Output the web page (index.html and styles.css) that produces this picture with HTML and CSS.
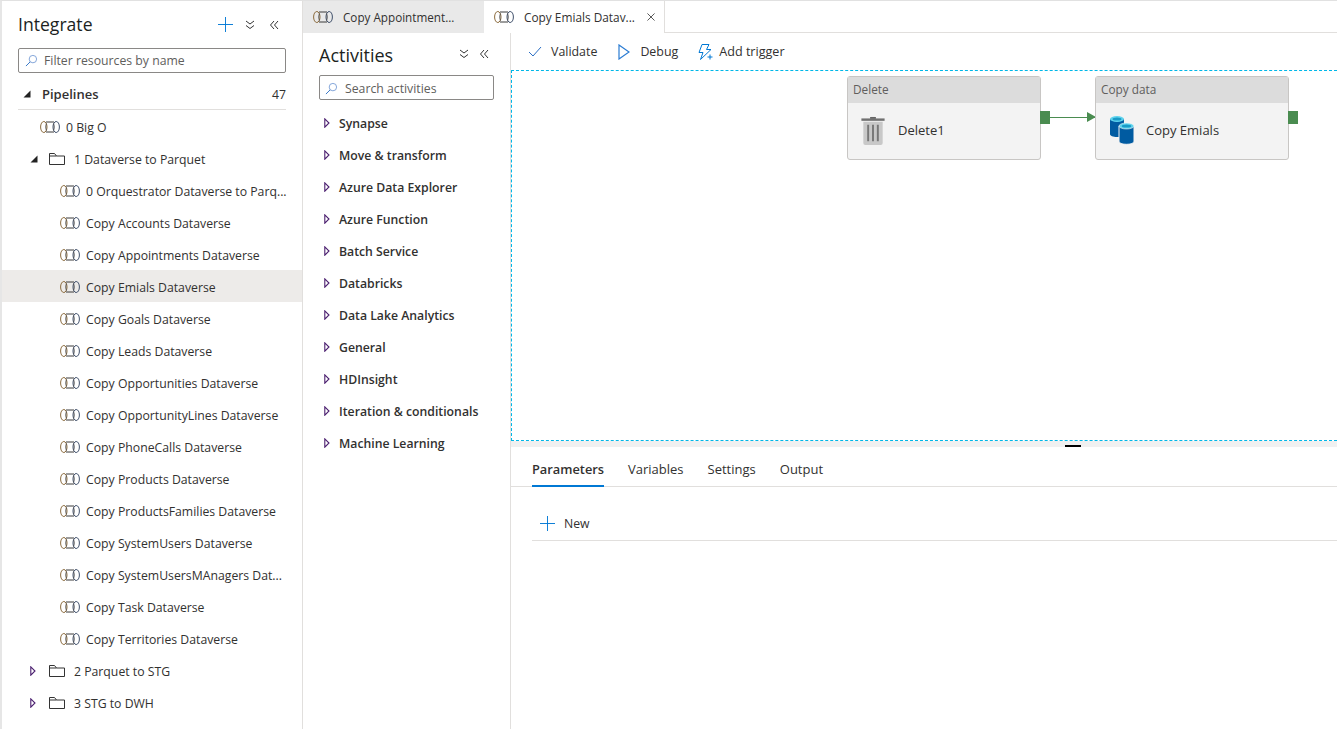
FILE: index.html
```html
<!DOCTYPE html>
<html lang="en">
<head>
	<meta charset="UTF-8">
	<title>Integrate</title>
	<link rel="stylesheet" href="styles.css">
</head>
<body>
	<svg class="defs" width="0" height="0">
		<symbol id="pipe" viewBox="0 0 20 14">
			<path d="M6 2h8M6 12h8" fill="none" stroke="#3b3b3b" stroke-width="1"/>
			<ellipse cx="3.800" cy="7" rx="3.200" ry="5.500" fill="none" stroke="#8a6a3c" stroke-width="1"/>
			<ellipse cx="16.200" cy="7" rx="3.200" ry="5.500" fill="none" stroke="#3f4f6a" stroke-width="1"/>
			<path d="M6.500 3.500c-1 2-1 5 0 7M13.500 3.500c1 2 1 5 0 7" fill="none" stroke="#3b3b3b" stroke-width=".8"/>
		</symbol>
		<symbol id="folder" viewBox="0 0 16 12">
			<path d="M.5 11.500V.5h5l2 2.500h8v8.500z" fill="none" stroke="#333" stroke-width="1"/>
			<path d="M.5 3h7" fill="none" stroke="#333" stroke-width="1"/>
		</symbol>
		<symbol id="search" viewBox="0 0 14 14">
			<circle cx="8.500" cy="5.500" r="4" fill="none" stroke="#7a9fd6" stroke-width="1"/>
			<path d="M5.500 8.500L1 13" fill="none" stroke="#2b6fc4" stroke-width="1"/>
		</symbol>
		<symbol id="down2" viewBox="0 0 10 10">
			<path d="M1 1l4 3 4-3M1 5.500l4 3 4-3" fill="none" stroke="#333" stroke-width="1"/>
		</symbol>
		<symbol id="left2" viewBox="0 0 10 10">
			<path d="M5 1L1.500 5 5 9M9 1L5.500 5 9 9" fill="none" stroke="#333" stroke-width="1"/>
		</symbol>
		<symbol id="closed" viewBox="0 0 6 10">
			<path d="M.8.800L5 5 .8 9.200z" fill="none" stroke="#4b1f6f" stroke-width="1.100"/>
		</symbol>
		<symbol id="open" viewBox="0 0 8 8">
			<path d="M7.500.5v7h-7z" fill="#222"/>
		</symbol>
	</svg>

	<div class="app">
		<aside class="side">
			<div class="side-head">
				<h1>Integrate</h1>
				<svg class="add" viewBox="0 0 16 16"><path d="M8 0v16M0 8h16" stroke="#0078d4" stroke-width="1" fill="none"/></svg>
				<svg class="ico10"><use href="#down2"/></svg>
				<svg class="ico10 gap"><use href="#left2"/></svg>
			</div>
			<div class="filter">
				<svg class="ico14"><use href="#search"/></svg>
				<span>Filter resources by name</span>
			</div>
			<div class="group">
				<svg class="tri"><use href="#open"/></svg>
				<b>Pipelines</b>
				<em>47</em>
			</div>
			<ul class="tree">
				<li class="lvl1"><svg class="pipe"><use href="#pipe"/></svg>0 Big O</li>
				<li class="lvl0"><svg class="tri"><use href="#open"/></svg><svg class="fold"><use href="#folder"/></svg>1 Dataverse to Parquet</li>
				<li class="lvl2"><svg class="pipe"><use href="#pipe"/></svg>0 Orquestrator Dataverse to Parq...</li>
				<li class="lvl2"><svg class="pipe"><use href="#pipe"/></svg>Copy Accounts Dataverse</li>
				<li class="lvl2"><svg class="pipe"><use href="#pipe"/></svg>Copy Appointments Dataverse</li>
				<li class="lvl2 sel"><svg class="pipe"><use href="#pipe"/></svg>Copy Emials Dataverse</li>
				<li class="lvl2"><svg class="pipe"><use href="#pipe"/></svg>Copy Goals Dataverse</li>
				<li class="lvl2"><svg class="pipe"><use href="#pipe"/></svg>Copy Leads Dataverse</li>
				<li class="lvl2"><svg class="pipe"><use href="#pipe"/></svg>Copy Opportunities Dataverse</li>
				<li class="lvl2"><svg class="pipe"><use href="#pipe"/></svg>Copy OpportunityLines Dataverse</li>
				<li class="lvl2"><svg class="pipe"><use href="#pipe"/></svg>Copy PhoneCalls Dataverse</li>
				<li class="lvl2"><svg class="pipe"><use href="#pipe"/></svg>Copy Products Dataverse</li>
				<li class="lvl2"><svg class="pipe"><use href="#pipe"/></svg>Copy ProductsFamilies Dataverse</li>
				<li class="lvl2"><svg class="pipe"><use href="#pipe"/></svg>Copy SystemUsers Dataverse</li>
				<li class="lvl2"><svg class="pipe"><use href="#pipe"/></svg>Copy SystemUsersMAnagers Dat...</li>
				<li class="lvl2"><svg class="pipe"><use href="#pipe"/></svg>Copy Task Dataverse</li>
				<li class="lvl2"><svg class="pipe"><use href="#pipe"/></svg>Copy Territories Dataverse</li>
				<li class="lvl0"><svg class="tri-c"><use href="#closed"/></svg><svg class="fold"><use href="#folder"/></svg>2 Parquet to STG</li>
				<li class="lvl0"><svg class="tri-c"><use href="#closed"/></svg><svg class="fold"><use href="#folder"/></svg>3 STG to DWH</li>
			</ul>
		</aside>

		<main class="main">
			<div class="tabs">
				<div class="tab"><svg class="pipe"><use href="#pipe"/></svg><span>Copy Appointment...</span></div>
				<div class="tab on"><svg class="pipe"><use href="#pipe"/></svg><span>Copy Emials Datav...</span>
					<svg class="x" viewBox="0 0 9 9"><path d="M.5.500l8 8M8.500.500l-8 8" stroke="#444" fill="none"/></svg>
				</div>
			</div>
			<div class="work">
				<section class="acts">
					<div class="acts-head">
						<h2>Activities</h2>
						<svg class="ico10"><use href="#down2"/></svg>
						<svg class="ico10 gap2"><use href="#left2"/></svg>
					</div>
					<div class="search">
						<svg class="ico14"><use href="#search"/></svg>
						<span>Search activities</span>
					</div>
					<ul class="act-list">
						<li><svg class="tri-c"><use href="#closed"/></svg>Synapse</li>
						<li><svg class="tri-c"><use href="#closed"/></svg>Move &amp; transform</li>
						<li><svg class="tri-c"><use href="#closed"/></svg>Azure Data Explorer</li>
						<li><svg class="tri-c"><use href="#closed"/></svg>Azure Function</li>
						<li><svg class="tri-c"><use href="#closed"/></svg>Batch Service</li>
						<li><svg class="tri-c"><use href="#closed"/></svg>Databricks</li>
						<li><svg class="tri-c"><use href="#closed"/></svg>Data Lake Analytics</li>
						<li><svg class="tri-c"><use href="#closed"/></svg>General</li>
						<li><svg class="tri-c"><use href="#closed"/></svg>HDInsight</li>
						<li><svg class="tri-c"><use href="#closed"/></svg>Iteration &amp; conditionals</li>
						<li><svg class="tri-c"><use href="#closed"/></svg>Machine Learning</li>
					</ul>
				</section>
				<section class="editor">
					<div class="toolbar">
						<button class="tool t1"><svg viewBox="0 0 14 11" class="tool-ico"><path d="M1 6l4 4 8-9" fill="none" stroke="#2b6fc4"/></svg>Validate</button>
						<button class="tool t2"><svg viewBox="0 0 12 16" class="tool-ico2"><path d="M1 1l10 7-10 7z" fill="none" stroke="#2b7cd3" stroke-width="1.200"/></svg>Debug</button>
						<button class="tool t3"><svg viewBox="0 0 16 16" class="tool-ico3"><path d="M5 .5h7L9.500 5.500H14L3.500 15.500 6 8.500H2z" fill="none" stroke="#0078d4"/><path d="M10.500 13h5M13 10.500v5" stroke="#0078d4" fill="none"/></svg>Add trigger</button>
					</div>
					<div class="canvas">
						<div class="node n1">
							<div class="node-type">Delete</div>
							<div class="node-body">
								<svg class="trash" viewBox="0 0 24 30">
									<path d="M9 1h6v2H9z" fill="#666"/>
									<path d="M0 2.500h24V5H0z" fill="#707070"/>
									<path d="M2 6h20v22a2 2 0 0 1-2 2H4a2 2 0 0 1-2-2z" fill="#c8c8c8"/>
									<path d="M7 9v17M12 9v17M17 9v17" stroke="#777" stroke-width="2"/>
								</svg>
								<span>Delete1</span>
							</div>
							<i class="port"></i>
						</div>
						<div class="link"><i></i></div>
						<div class="node n2">
							<div class="node-type">Copy data</div>
							<div class="node-body">
								<svg class="db" viewBox="0 0 26 30">
									<path d="M1 4v15c0 2 3 3 7 3s7-1 7-3V4z" fill="#005ba1"/>
									<ellipse cx="8" cy="4" rx="7" ry="3" fill="#5fd4ee"/>
									<ellipse cx="8" cy="4" rx="4.500" ry="1.600" fill="#1a9bc7"/>
									<path d="M10 11v15c0 2.200 3.200 3.300 7.500 3.300S25 28.200 25 26V11z" fill="#005ba1" stroke="#f3f3f3"/>
									<ellipse cx="17.500" cy="11" rx="7.500" ry="3" fill="#5fd4ee" stroke="#f3f3f3" stroke-width=".6"/>
									<ellipse cx="17.500" cy="11" rx="4.800" ry="1.600" fill="#1a9bc7"/>
								</svg>
								<span>Copy Emials</span>
							</div>
							<i class="port"></i>
						</div>
					</div>
					<div class="split"><i></i></div>
					<div class="props">
						<div class="prop-tabs">
							<a class="on">Parameters</a>
							<a>Variables</a>
							<a>Settings</a>
							<a>Output</a>
						</div>
						<div class="new-row">
							<svg viewBox="0 0 16 16"><path d="M8 0v16M0 8h16" stroke="#0078d4" fill="none"/></svg>
							New
						</div>
					</div>
				</section>
			</div>
		</main>
	</div>
</body>
</html>
```

FILE: styles.css
```css
* { box-sizing:border-box; }
html, body { height:100%; }
body { margin:0;background:#fff;color:#323130;font-size:12.25px;font-family:"Open Sans","Noto Sans",sans-serif;overflow:hidden; }
ul { margin:0;padding:0;list-style:none; }
h1, h2 { margin:0;font-weight:400;color:#201f1e; }
svg { display:block;flex:none; }
.defs { position:absolute; }

.app { display:flex;height:729px;border-top:1px solid #e1e1e1;border-left:2px solid #e6e6e6; }

/* left resources panel */
.side { width:301px;flex:none;padding:0 16px;border-right:1px solid #e1dfdd;background:#fff; }
.side-head { display:flex;align-items:center;height:47px; }
.side-head h1 { font-size:17.6px;flex:1;padding-bottom:2px; }
.add { width:15px;height:15px;margin-right:12px; }
.ico10 { width:10px;height:10px; }
.gap { margin-left:14px;margin-right:7px; }
.filter, .search { display:flex;align-items:center;border:1px solid #8a8886;border-radius:2px;color:#605e5c; }
.filter { height:25px;padding-left:6px; }
.ico14 { width:13px;height:13px;margin-right:6px; }
.group { display:flex;align-items:center;height:37px;padding-top:6px;border-bottom:1px solid #e1dfdd; }
.group b { flex:1;font-weight:600;margin-left:10px;font-size:13px; }
.group em { font-style:normal; }
.tri { width:8px;height:8px;margin-left:5px;margin-right:1px; }
.tri-c { width:6px;height:10px; }

.tree { margin:0 -16px; }
.tree li { display:flex;align-items:center;height:32px;padding-top:2px;white-space:nowrap; }
.pipe { width:20px;height:14px;margin-right:6px; }
.fold { width:16px;height:12px;margin-right:9px; }
.lvl0 { padding-left:28px; }
.lvl0 .tri { margin-left:0;margin-right:11px; }
.lvl0 .tri-c { margin-right:13px; }
.lvl1 { padding-left:38px; }
.lvl2 { padding-left:58px; }
.sel { background:#edebe9; }

/* main column */
.main { flex:1;min-width:0;display:flex;flex-direction:column; }
.tabs { display:flex;height:32px;border-bottom:1px solid #e1dfdd;font-size:11.7px; }
.tab { display:flex;align-items:center;width:181px;height:32px;padding-left:10px;background:#e9e9e9;color:#323130; }
.tab .pipe { margin-right:10px; }
.tab.on { width:181px;background:#fff;border-right:1px solid #e1dfdd;font-size:11.85px; }
.x { width:8px;height:8px;margin-left:12px; }

.work { flex:1;display:flex;min-height:0; }

/* activities */
.acts { width:208px;flex:none;padding:0 16px;border-right:1px solid #e1dfdd; }
.acts-head { display:flex;align-items:center;height:42px; }
.acts-head h2 { font-size:18px;flex:1;padding-top:2px; }
.gap2 { margin-left:10px;margin-right:5px; }
.search { height:25px;padding-left:5px;padding-top:1px; }
.search .ico14 { margin-right:7px; }
.act-list { margin-top:7px; }
.act-list li { display:flex;align-items:center;height:32px;font-weight:600;white-space:nowrap; }
.act-list .tri-c { margin-left:5px;margin-right:9px; }

/* editor */
.editor { flex:1;min-width:0;display:flex;flex-direction:column; }
.toolbar { display:flex;align-items:center;height:37px;padding-left:17px;font-size:12.4px; }
.tool { display:flex;align-items:center;border:0;background:none;padding:0;font:inherit;color:#323130; }
.tool-ico { width:14px;height:11px;margin-right:9px; }
.tool-ico2 { width:12px;height:16px;margin-right:10px; }
.tool-ico3 { width:16px;height:16px;margin-right:6px; }
.t2 { margin-left:21px; }
.t3 { margin-left:19px;font-size:12.6px; }

.canvas { position:relative;height:371px;border:1px dashed #00b7e8;border-width:1px 0 1px 1px; }
.node { position:absolute;top:5px;width:194px;height:84px;background:#f3f3f3;border:1px solid #c8c6c4;border-radius:3px; }
.n1 { left:335px; }
.n2 { left:583px; }
.node-type { height:26px;line-height:25px;padding-left:5px;background:#dcdcdc;color:#605e5c;font-size:11.8px; }
.node-body { display:flex;align-items:center;height:56px;padding-left:13px;padding-bottom:2px;color:#323130;font-size:13px; }
.trash { width:24px;height:29px;margin-right:13px; }
.db { width:26px;height:30px;margin-right:11px; }
.port { position:absolute;left:192px;top:34px;width:10px;height:13px;background:#4a8c50; }
.link { position:absolute;left:538px;top:46px;width:46px;height:1px;background:#4a8c50; }
.link i { position:absolute;right:0;top:-5px;border-left:9px solid #4a8c50;border-top:5.500px solid transparent;border-bottom:5.500px solid transparent; }

.split { position:relative;height:6px;background:#f0f0f0; }
.split i { position:absolute;left:554px;top:4px;width:16px;height:2px;background:#000; }

.props { flex:1;background:#fff;padding-left:21px; }
.prop-tabs { display:flex;gap:24px;height:40px;border-bottom:1px solid #e1dfdd;margin-left:-21px;padding-left:21px;font-size:13px; }
.prop-tabs a { display:block;height:40px;padding-top:4px;line-height:36px; }
.prop-tabs .on { font-size:12.8px;font-weight:600;border-bottom:2px solid #0078d4; }
.new-row { display:flex;align-items:center;height:54px;padding-top:20px;border-bottom:1px solid #e1dfdd;padding-left:8px; }
.new-row svg { width:15px;height:15px;margin-right:9px; }
```
